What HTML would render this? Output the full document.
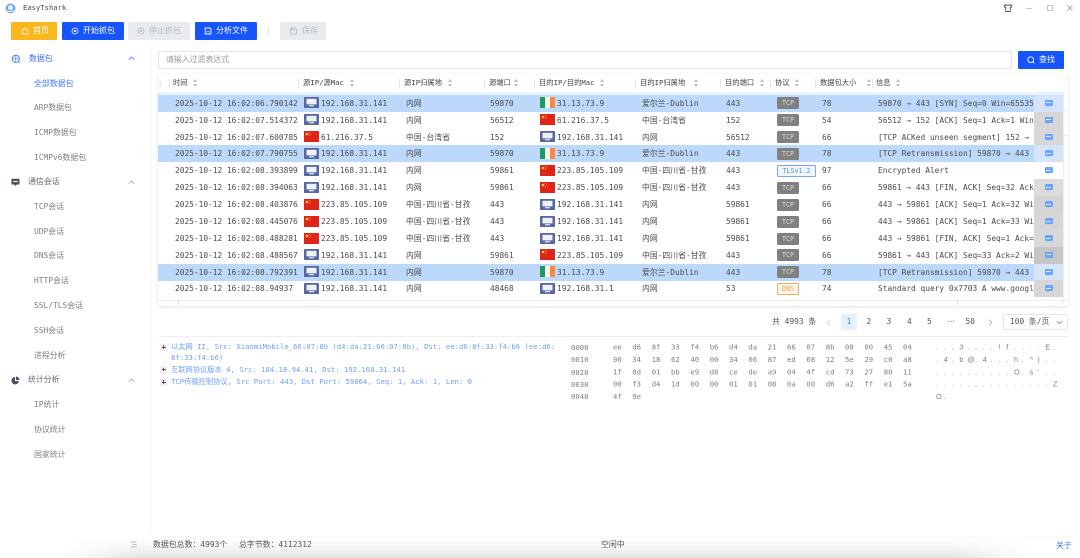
<!DOCTYPE html>
<html><head><meta charset="utf-8"><style>
*{box-sizing:border-box}
html,body{margin:0;padding:0;background:#fff}
#p{width:1080px;height:558px;position:relative;overflow:hidden;background:#fff;font-family:"DejaVu Sans Mono","Noto Sans CJK SC",monospace;font-size:7.85px;color:#4b4b4b;filter:blur(.3px)}
body{width:1080px;height:558px;overflow:hidden}
.a{position:absolute;white-space:nowrap}
.btn{position:absolute;top:22px;height:18px;border-radius:1px;color:#fff;background:#1555fb;font-size:8px;line-height:18px;font-family:"Noto Sans CJK SC",sans-serif}
.btn span{position:absolute;top:0}
.btn svg{position:absolute;top:5px}
.dis{background:#e9ebef;color:#b5b9c0}
.s{position:absolute;left:34px;color:#7d8087;font-size:7.9px;line-height:10px;white-space:nowrap;font-family:"DejaVu Sans Mono","Noto Sans CJK SC",monospace}
.g{position:absolute;left:29px;color:#676a70;font-size:7.9px;line-height:10px;font-family:"Noto Sans CJK SC",sans-serif}
.chev{position:absolute;left:128px}
.th{position:absolute;top:78px;font-size:7.3px;line-height:10px;color:#444;white-space:nowrap}
.th i{position:absolute;top:0;width:5px;height:10px}
.th i:before{content:"";position:absolute;left:0;top:1px;border:2.2px solid transparent;border-top:0;border-bottom:3px solid #bbb}
.th i:after{content:"";position:absolute;left:0;top:6px;border:2.2px solid transparent;border-bottom:0;border-top:3px solid #bbb}
.sp{position:absolute;top:79px;width:1px;height:10px;background:#e6e6e6}
.r{position:absolute;left:158px;width:905px;height:17px;line-height:17px;overflow:hidden}
.r.h{background:#bcd8fb}
.r span{position:absolute;top:0;white-space:nowrap}
.r svg{position:absolute;top:2.5px;width:15px;height:11px}
.c1{left:17px}.c2{left:163px}.c3{left:248px}.c4{left:332px}.c5{left:399px}.c6{left:484px}.c7{left:568px}.c8{left:664px}.c9{left:720px;width:156px;overflow:hidden}
.i1{left:146px}.i2{left:382px}
.tag{position:absolute;left:619px;top:2.5px;width:22px;height:12px;background:#808080;color:#dcdcdc;border-radius:1.5px;font-size:6.6px;line-height:12px;text-align:center}
.op{position:absolute;left:876px;top:0;width:29px;height:17px}
.op b{position:absolute;left:10.500px;top:5px;width:8px;height:6px;background:#6aa5fb;border-radius:1px}
.op b:after{content:"";position:absolute;left:2.5px;top:6px;border:1.5px solid transparent;border-top:1.5px solid #6aa5fb;border-bottom:0}
.op b:before{content:"";position:absolute;left:1.5px;top:2.5px;width:5px;height:1px;background:#dbe9ff}
.pg{position:absolute;top:317px;font-size:7.9px;line-height:10px;color:#555;white-space:nowrap}
.d{position:absolute;left:171px;color:#6fa0fb;font-size:7.25px;line-height:11px;width:395px}
.pl{position:absolute;left:160px;width:7px;height:7px;background:#efefef;border-radius:1px}
.pl:before{content:"";position:absolute;left:2px;top:3px;width:3.5px;height:1px;background:#555}
.pl:after{content:"";position:absolute;left:3.2px;top:1.7px;width:1px;height:3.5px;background:#555}
.x{position:absolute;color:#7c7f86;font-size:7.25px;line-height:10px;white-space:pre}
</style></head><body><div id="p">
<svg width="0" height="0" style="position:absolute"><defs>
<symbol id="pc" viewBox="0 0 15 11"><rect width="15" height="11" rx=".8" fill="#56689e"/><rect x="2.5" y="1.8" width="10" height="5.6" fill="#eef1f8"/><rect x="5" y="8.2" width="5" height="1.1" fill="#eef1f8"/></symbol>
<symbol id="cn" viewBox="0 0 15 11"><rect width="15" height="11" fill="#e0241a"/><circle cx="3" cy="3" r="1.3" fill="#f6d32d"/><circle cx="5.6" cy="1.5" r=".45" fill="#f6d32d"/><circle cx="6.3" cy="3" r=".45" fill="#f6d32d"/><circle cx="5.6" cy="4.6" r=".45" fill="#f6d32d"/></symbol>
<symbol id="ie" viewBox="0 0 15 11"><rect width="5" height="11" fill="#1f9a5b"/><rect x="5" width="5" height="11" fill="#f8f8f8"/><rect x="10" width="5" height="11" fill="#fb8a3c"/></symbol>
</defs></svg>

<!-- bottom gray glow -->
<div style="position:absolute;left:60px;top:538px;width:970px;height:20px;background:linear-gradient(to bottom,#fff 0,#f6f6f6 45%,#e4e4e4 100%);-webkit-mask-image:linear-gradient(to right,transparent 0,#000 8%,#000 92%,transparent 100%)"></div>

<!-- title bar -->
<svg class="a" style="left:5px;top:3px" width="11" height="11" viewBox="0 0 11 11"><circle cx="5.5" cy="5.5" r="5" fill="#6ea5ec"/><circle cx="5.5" cy="4.6" r="2.6" fill="#e4effc"/><path d="M1.5 7.5q4 2.4 8 0" stroke="#fff" fill="none"/></svg>
<div class="a" style="left:23px;top:3px;font-size:7.2px;line-height:10px;color:#4a4a4a">EasyTshark</div>
<svg class="a" style="left:1003px;top:3px" width="10" height="10" viewBox="0 0 10 10"><path d="M2.8 1.5L1 2.8l.9 1.6.9-.3V8.6h4.4V4.1l.9.3L9 2.8 7.2 1.5q-2.2 1.6-4.4 0z" fill="none" stroke="#555" stroke-width=".9"/></svg>
<div class="a" style="left:1026px;top:8px;width:6px;height:1px;background:#ccc"></div>
<div class="a" style="left:1047px;top:5px;width:6px;height:6px;border:1px solid #c6c6c6"></div>
<svg class="a" style="left:1067px;top:5px" width="6" height="6" viewBox="0 0 6 6"><path d="M.5.5l5 5M5.500.5l-5 5" stroke="#aaa" stroke-width=".9"/></svg>

<!-- toolbar -->
<div class="btn" style="left:11px;width:46px;background:#fab81e"><svg style="left:10px" width="8" height="8" viewBox="0 0 8 8"><path d="M1 3.500L4 1l3 2.500V7H1z" fill="none" stroke="#fff" stroke-width=".8"/></svg><span style="left:22px">首页</span></div>
<div class="btn" style="left:62px;width:62px"><svg style="left:9px" width="8" height="8" viewBox="0 0 8 8"><circle cx="4" cy="4" r="3" fill="none" stroke="#fff" stroke-width=".8"/><circle cx="4" cy="4" r="1.100" fill="#fff"/></svg><span style="left:21px">开始抓包</span></div>
<div class="btn dis" style="left:128px;width:62px"><svg style="left:9px" width="8" height="8" viewBox="0 0 8 8"><circle cx="4" cy="4" r="3" fill="none" stroke="#b5b9c0" stroke-width=".8"/><circle cx="4" cy="4" r="1.100" fill="#b5b9c0"/></svg><span style="left:21px">停止抓包</span></div>
<div class="btn" style="left:195px;width:62px"><svg style="left:9px" width="8" height="8" viewBox="0 0 8 8"><path d="M1.200 1h4.600L7 2.200V7H1.200zM2.600 4.800h3" fill="none" stroke="#fff" stroke-width=".9"/></svg><span style="left:21px">分析文件</span></div>
<div class="a" style="left:268px;top:28px;width:1px;height:7px;background:#e4e4e4"></div>
<div class="btn dis" style="left:280px;width:46px"><svg style="left:10px" width="7" height="8" viewBox="0 0 7 8"><path d="M.8 1h4.400L6.400 2.200V7H.8zM2 1v2h3" fill="none" stroke="#b5b9c0" stroke-width=".8"/></svg><span style="left:22px">保存</span></div>

<!-- main panel -->
<div style="position:absolute;left:152px;top:44px;width:923px;height:492px;background:#fff;box-shadow:0 0 4px rgba(0,0,0,.06)"></div>

<!-- sidebar -->
<svg class="a" style="left:11px;top:54px" width="10" height="10" viewBox="0 0 10 10"><circle cx="4.800" cy="4.800" r="3.600" fill="none" stroke="#3f7bf0" stroke-width=".9"/><path d="M1.200 4.800h7.200M4.800 1.200v7.200M7.500 7.500l1.500 1.500" stroke="#3f7bf0" stroke-width=".7"/></svg>
<div class="g" style="top:54px;left:29px;color:#3f6ff0">数据包</div>
<svg class="chev" style="top:56px" width="7" height="5" viewBox="0 0 7 5"><path d="M.7 3.800L3.500 1l2.800 2.800" fill="none" stroke="#4f7ff0" stroke-width=".8"/></svg>
<div class="s" style="top:78.500px;color:#3f7bf5">全部数据包</div>
<div class="s" style="top:103px">ARP数据包</div>
<div class="s" style="top:127.500px">ICMP数据包</div>
<div class="s" style="top:152.500px">ICMPv6数据包</div>
<svg class="a" style="left:11px;top:178px" width="9" height="9" viewBox="0 0 9 9"><path d="M.5.800h8v5.700H5.700L4.500 8 3.300 6.500H.5z" fill="#4a5260"/><rect x="2.200" y="3" width="4.600" height="1" fill="#fff"/></svg>
<div class="g" style="top:177px;left:28px">通信会话</div>
<svg class="chev" style="top:180px" width="7" height="5" viewBox="0 0 7 5"><path d="M.7 3.800L3.500 1l2.800 2.800" fill="none" stroke="#aaa" stroke-width=".8"/></svg>
<div class="s" style="top:202px">TCP会话</div>
<div class="s" style="top:227px">UDP会话</div>
<div class="s" style="top:251px">DNS会话</div>
<div class="s" style="top:276px">HTTP会话</div>
<div class="s" style="top:301px">SSL/TLS会话</div>
<div class="s" style="top:325.500px">SSH会话</div>
<div class="s" style="top:350.500px">进程分析</div>
<svg class="a" style="left:11px;top:376px" width="9" height="9" viewBox="0 0 9 9"><path d="M4 1a3.700 3.700 0 1 0 3.800 4H4z" fill="#4a5260"/><path d="M5 .5a3.500 3.500 0 0 1 3.500 3.500H5z" fill="#4a5260"/></svg>
<div class="g" style="top:375px;left:28px">统计分析</div>
<svg class="chev" style="top:378px" width="7" height="5" viewBox="0 0 7 5"><path d="M.7 3.800L3.500 1l2.800 2.800" fill="none" stroke="#aaa" stroke-width=".8"/></svg>
<div class="s" style="top:400px">IP统计</div>
<div class="s" style="top:425px">协议统计</div>
<div class="s" style="top:449.500px">国家统计</div>

<!-- filter -->
<div style="position:absolute;left:158px;top:51px;width:854px;height:18px;border:1px solid #e6e6e6;border-radius:1px;background:#fff"></div>
<div class="a" style="left:166px;top:55px;font-size:7.900px;line-height:10px;color:#9a9a9a;font-family:'Noto Sans CJK SC',sans-serif">请输入过滤表达式</div>
<div style="position:absolute;left:1018px;top:51px;width:46px;height:18px;background:#1555fb;border-radius:1px"></div>
<svg class="a" style="left:1027px;top:56px" width="8" height="8" viewBox="0 0 8 8"><circle cx="3.700" cy="3.700" r="2.900" fill="none" stroke="#fff" stroke-width=".9"/><path d="M5.800 5.800l1.500 1.500" stroke="#fff" stroke-width=".9"/></svg>
<div class="a" style="left:1039px;top:55px;color:#fff;font-size:8px;line-height:10px;font-family:'Noto Sans CJK SC',sans-serif">查找</div>

<!-- table frame -->
<div style="position:absolute;left:158px;top:74px;width:910px;height:232px;background:#fff;box-shadow:0 1px 3px rgba(0,0,0,.12)"></div>
<div style="position:absolute;left:158px;top:92px;width:905px;height:2.500px;background:#e9f2fd"></div>
<div class="a" style="left:158px;top:78px;font-size:7px;line-height:10px;color:#888">:</div>
<div class="sp" style="left:169px"></div><div class="sp" style="left:298px"></div><div class="sp" style="left:399px"></div><div class="sp" style="left:484px"></div><div class="sp" style="left:534px"></div><div class="sp" style="left:635px"></div><div class="sp" style="left:720px"></div><div class="sp" style="left:770px"></div><div class="sp" style="left:815px"></div><div class="sp" style="left:872px"></div>
<div class="th" style="left:173px">时间<i style="left:20px"></i></div>
<div class="th" style="left:303px">源IP/源Mac<i style="left:47px"></i></div>
<div class="th" style="left:404px">源IP归属地<i style="left:44px"></i></div>
<div class="th" style="left:489px">源端口<i style="left:25px"></i></div>
<div class="th" style="left:539px">目的IP/目的Mac<i style="left:61px"></i></div>
<div class="th" style="left:640px">目的IP归属地<i style="left:54px"></i></div>
<div class="th" style="left:725px">目的端口<i style="left:35px"></i></div>
<div class="th" style="left:775px">协议<i style="left:20px"></i></div>
<div class="th" style="left:820px">数据包大小<i style="left:47px"></i></div>
<div class="th" style="left:876px">信息<i style="left:20px"></i></div>

<!-- rows -->
<div class="r h" style="top:94.500px"><span class="c1">2025-10-12 16:02:06.790142</span><svg class="i1"><use href="#pc"/></svg><span class="c2">192.168.31.141</span><span class="c3">内网</span><span class="c4">59870</span><svg class="i2"><use href="#ie"/></svg><span class="c5">31.13.73.9</span><span class="c6">爱尔兰-Dublin</span><span class="c7">443</span><div class="tag">TCP</div><span class="c8">78</span><span class="c9">59870 → 443 [SYN] Seq=0 Win=65535 Len=0</span><div class="op" style="background:#d5e4f9"><b></b></div></div>
<div class="r" style="top:111.500px"><span class="c1">2025-10-12 16:02:07.514372</span><svg class="i1"><use href="#pc"/></svg><span class="c2">192.168.31.141</span><span class="c3">内网</span><span class="c4">56512</span><svg class="i2"><use href="#cn"/></svg><span class="c5">61.216.37.5</span><span class="c6">中国-台湾省</span><span class="c7">152</span><div class="tag">TCP</div><span class="c8">54</span><span class="c9">56512 → 152 [ACK] Seq=1 Ack=1 Win=65535</span><div class="op" style="background:#d6d6d6"><b></b></div></div>
<div class="r" style="top:128.500px"><span class="c1">2025-10-12 16:02:07.600785</span><svg class="i1"><use href="#cn"/></svg><span class="c2">61.216.37.5</span><span class="c3">中国-台湾省</span><span class="c4">152</span><svg class="i2"><use href="#pc"/></svg><span class="c5">192.168.31.141</span><span class="c6">内网</span><span class="c7">56512</span><div class="tag">TCP</div><span class="c8">66</span><span class="c9">[TCP ACKed unseen segment] 152 → 56512</span><div class="op" style="background:#d8d8d8"><b></b></div></div>
<div class="r h" style="top:145.300px"><span class="c1">2025-10-12 16:02:07.790755</span><svg class="i1"><use href="#pc"/></svg><span class="c2">192.168.31.141</span><span class="c3">内网</span><span class="c4">59870</span><svg class="i2"><use href="#ie"/></svg><span class="c5">31.13.73.9</span><span class="c6">爱尔兰-Dublin</span><span class="c7">443</span><div class="tag">TCP</div><span class="c8">78</span><span class="c9">[TCP Retransmission] 59870 → 443</span><div class="op" style="background:#d5e4f9"><b></b></div></div>
<div class="r" style="top:162px"><span class="c1">2025-10-12 16:02:08.393899</span><svg class="i1"><use href="#pc"/></svg><span class="c2">192.168.31.141</span><span class="c3">内网</span><span class="c4">59861</span><svg class="i2"><use href="#cn"/></svg><span class="c5">223.85.105.109</span><span class="c6">中国-四川省-甘孜</span><span class="c7">443</span><div class="tag" style="width:39px;background:#f2f7ff;color:#5a8cf0;border:1px solid #7aa5f5;line-height:10px">TLSv1.2</div><span class="c8" style="left:664px">97</span><span class="c9">Encrypted Alert</span><div class="op"><b></b></div></div>
<div class="r" style="top:179px"><span class="c1">2025-10-12 16:02:08.394063</span><svg class="i1"><use href="#pc"/></svg><span class="c2">192.168.31.141</span><span class="c3">内网</span><span class="c4">59861</span><svg class="i2"><use href="#cn"/></svg><span class="c5">223.85.105.109</span><span class="c6">中国-四川省-甘孜</span><span class="c7">443</span><div class="tag">TCP</div><span class="c8">66</span><span class="c9">59861 → 443 [FIN, ACK] Seq=32 Ack=1 Win</span><div class="op" style="background:#dcdcdc"><b></b></div></div>
<div class="r" style="top:196px"><span class="c1">2025-10-12 16:02:08.403876</span><svg class="i1"><use href="#cn"/></svg><span class="c2">223.85.105.109</span><span class="c3">中国-四川省-甘孜</span><span class="c4">443</span><svg class="i2"><use href="#pc"/></svg><span class="c5">192.168.31.141</span><span class="c6">内网</span><span class="c7">59861</span><div class="tag">TCP</div><span class="c8">66</span><span class="c9">443 → 59861 [ACK] Seq=1 Ack=32 Win=65535</span><div class="op" style="background:#d4d4d4"><b></b></div></div>
<div class="r" style="top:213px"><span class="c1">2025-10-12 16:02:08.445076</span><svg class="i1"><use href="#cn"/></svg><span class="c2">223.85.105.109</span><span class="c3">中国-四川省-甘孜</span><span class="c4">443</span><svg class="i2"><use href="#pc"/></svg><span class="c5">192.168.31.141</span><span class="c6">内网</span><span class="c7">59861</span><div class="tag">TCP</div><span class="c8">66</span><span class="c9">443 → 59861 [ACK] Seq=1 Ack=33 Win=65535</span><div class="op" style="background:#d6d6d6"><b></b></div></div>
<div class="r" style="top:230px"><span class="c1">2025-10-12 16:02:08.488281</span><svg class="i1"><use href="#cn"/></svg><span class="c2">223.85.105.109</span><span class="c3">中国-四川省-甘孜</span><span class="c4">443</span><svg class="i2"><use href="#pc"/></svg><span class="c5">192.168.31.141</span><span class="c6">内网</span><span class="c7">59861</span><div class="tag">TCP</div><span class="c8">66</span><span class="c9">443 → 59861 [FIN, ACK] Seq=1 Ack=33 Win</span><div class="op" style="background:#d8d8d8"><b></b></div></div>
<div class="r" style="top:246.800px"><span class="c1">2025-10-12 16:02:08.488567</span><svg class="i1"><use href="#pc"/></svg><span class="c2">192.168.31.141</span><span class="c3">内网</span><span class="c4">59861</span><svg class="i2"><use href="#cn"/></svg><span class="c5">223.85.105.109</span><span class="c6">中国-四川省-甘孜</span><span class="c7">443</span><div class="tag">TCP</div><span class="c8">66</span><span class="c9">59861 → 443 [ACK] Seq=33 Ack=2 Win=65535</span><div class="op" style="background:#c6c6c6"><b></b></div></div>
<div class="r h" style="top:263.500px"><span class="c1">2025-10-12 16:02:08.792391</span><svg class="i1"><use href="#pc"/></svg><span class="c2">192.168.31.141</span><span class="c3">内网</span><span class="c4">59870</span><svg class="i2"><use href="#ie"/></svg><span class="c5">31.13.73.9</span><span class="c6">爱尔兰-Dublin</span><span class="c7">443</span><div class="tag">TCP</div><span class="c8">78</span><span class="c9">[TCP Retransmission] 59870 → 443</span><div class="op" style="background:#d5e4f9"><b></b></div></div>
<div class="r" style="top:280px"><span class="c1">2025-10-12 16:02:08.94937</span><svg class="i1"><use href="#pc"/></svg><span class="c2">192.168.31.141</span><span class="c3">内网</span><span class="c4">48468</span><svg class="i2"><use href="#pc"/></svg><span class="c5">192.168.31.1</span><span class="c6">内网</span><span class="c7">53</span><div class="tag" style="background:#fff6ec;color:#fb9a3c;border:1px solid #fba85c;line-height:10px">DNS</div><span class="c8">74</span><span class="c9">Standard query 0x7703 A www.google.com</span><div class="op" style="background:#d6d6d6"><b></b></div></div>

<!-- table scrollbars -->
<div style="position:absolute;left:158px;top:300px;width:910px;height:1px;background:#eee"></div>
<div style="position:absolute;left:178px;top:300px;width:1px;height:5px;background:#e4e4e4"></div>
<div style="position:absolute;left:957px;top:300px;width:1px;height:5px;background:#e4e4e4"></div>
<div style="position:absolute;left:1062px;top:300px;width:1px;height:5px;background:#e4e4e4"></div>
<div style="position:absolute;left:1063px;top:92px;width:1px;height:208px;background:#eee"></div>
<div style="position:absolute;left:1063px;top:110px;width:5px;height:1px;background:#eee"></div>
<div style="position:absolute;left:1063px;top:135px;width:5px;height:1px;background:#eee"></div>

<!-- pagination -->
<div class="pg" style="left:772px">共 4993 条</div>
<svg class="a" style="left:826px;top:319px" width="5" height="7" viewBox="0 0 5 7"><path d="M3.800.8L1.200 3.500l2.600 2.700" fill="none" stroke="#ccc" stroke-width=".8"/></svg>
<div class="a" style="left:841px;top:314px;width:16px;height:16px;background:#e6f0fe;border-radius:1px;color:#3d7ef5;font-size:7.900px;line-height:16px;text-align:center">1</div>
<div class="pg" style="left:866.500px">2</div><div class="pg" style="left:886.500px">3</div><div class="pg" style="left:907px">4</div><div class="pg" style="left:927px">5</div><div class="pg" style="left:946.500px;color:#888;letter-spacing:-2.300px">···</div><div class="pg" style="left:965.500px">50</div>
<svg class="a" style="left:988px;top:319px" width="5" height="7" viewBox="0 0 5 7"><path d="M1.200.8l2.600 2.700-2.600 2.700" fill="none" stroke="#999" stroke-width=".7"/></svg>
<div class="a" style="left:1003px;top:314px;width:65px;height:16px;border:1px solid #e6e6e6;border-radius:1px;line-height:14px;padding-left:6px;color:#555">100 条/页</div>
<svg class="a" style="left:1056px;top:320px" width="7" height="5" viewBox="0 0 7 5"><path d="M.8 1l2.700 2.700L6.200 1" fill="none" stroke="#888" stroke-width=".8"/></svg>

<div style="position:absolute;left:158px;top:336px;width:910px;height:1px;background:#efefef"></div>

<!-- detail -->
<div class="pl" style="left:160px;top:343.500px"></div>
<div class="d" style="top:341px">以太网 II, Src: XiaomiMobile_66:07:8b (d4:da:21:66:07:8b), Dst: ee:d6:8f:33:f4:b6 (ee:d6:<br>8f:33:f4:b6)</div>
<div class="pl" style="left:160px;top:366px"></div>
<div class="d" style="top:363.500px">互联网协议版本 4, Src: 104.18.94.41, Dst: 192.168.31.141</div>
<div class="pl" style="left:160px;top:378.500px"></div>
<div class="d" style="top:376px">TCP传输控制协议, Src Port: 443, Dst Port: 59864, Seq: 1, Ack: 1, Len: 0</div>

<!-- hex -->
<div class="x" style="left:571px;top:342px;line-height:12.350px">0000
0010
0020
0030
0040</div>
<svg class="a" style="left:0;top:0;overflow:visible" width="1080" height="558" font-family="DejaVu Sans Mono" font-size="7.25" fill="#7c7f86">
<text y="349.500"><tspan x="613">ee</tspan><tspan x="632.300">d6</tspan><tspan x="651.700">8f</tspan><tspan x="671">33</tspan><tspan x="690.400">f4</tspan><tspan x="709.700">b6</tspan><tspan x="729">d4</tspan><tspan x="748.400">da</tspan><tspan x="767.700">21</tspan><tspan x="787">66</tspan><tspan x="806.400">07</tspan><tspan x="825.800">8b</tspan><tspan x="845">08</tspan><tspan x="864.400">00</tspan><tspan x="883.800">45</tspan><tspan x="903">04</tspan></text>
<text y="362"><tspan x="613">00</tspan><tspan x="632.300">34</tspan><tspan x="651.700">18</tspan><tspan x="671">62</tspan><tspan x="690.400">40</tspan><tspan x="709.700">00</tspan><tspan x="729">34</tspan><tspan x="748.400">06</tspan><tspan x="767.700">87</tspan><tspan x="787">ed</tspan><tspan x="806.400">68</tspan><tspan x="825.800">12</tspan><tspan x="845">5e</tspan><tspan x="864.400">29</tspan><tspan x="883.800">c0</tspan><tspan x="903">a8</tspan></text>
<text y="374.300"><tspan x="613">1f</tspan><tspan x="632.300">8d</tspan><tspan x="651.700">01</tspan><tspan x="671">bb</tspan><tspan x="690.400">e9</tspan><tspan x="709.700">d8</tspan><tspan x="729">ce</tspan><tspan x="748.400">de</tspan><tspan x="767.700">a9</tspan><tspan x="787">04</tspan><tspan x="806.400">4f</tspan><tspan x="825.800">cd</tspan><tspan x="845">73</tspan><tspan x="864.400">27</tspan><tspan x="883.800">80</tspan><tspan x="903">11</tspan></text>
<text y="386.700"><tspan x="613">00</tspan><tspan x="632.300">f3</tspan><tspan x="651.700">d4</tspan><tspan x="671">1d</tspan><tspan x="690.400">00</tspan><tspan x="709.700">00</tspan><tspan x="729">01</tspan><tspan x="748.400">01</tspan><tspan x="767.700">08</tspan><tspan x="787">0a</tspan><tspan x="806.400">00</tspan><tspan x="825.800">d6</tspan><tspan x="845">a2</tspan><tspan x="864.400">ff</tspan><tspan x="883.800">e1</tspan><tspan x="903">5a</tspan></text>
<text y="399"><tspan x="613">4f</tspan><tspan x="632.300">9e</tspan></text>
<g font-family="Liberation Sans">
<text y="349.500" x="936" letter-spacing="0">.<tspan x="943.800">.</tspan><tspan x="951.600">.</tspan><tspan x="959.400">3</tspan><tspan x="967.200">.</tspan><tspan x="975">.</tspan><tspan x="982.800">.</tspan><tspan x="990.600">.</tspan><tspan x="998.400">!</tspan><tspan x="1006.200">f</tspan><tspan x="1014">.</tspan><tspan x="1021.800">.</tspan><tspan x="1029.600">.</tspan><tspan x="1037.400">.</tspan><tspan x="1045.200">E</tspan><tspan x="1053">.</tspan></text>
<text y="362" x="936">.<tspan x="943.800">4</tspan><tspan x="951.600">.</tspan><tspan x="959.400">b</tspan><tspan x="967.200">@</tspan><tspan x="975">.</tspan><tspan x="982.800">4</tspan><tspan x="990.600">.</tspan><tspan x="998.400">.</tspan><tspan x="1006.200">.</tspan><tspan x="1014">h</tspan><tspan x="1021.800">.</tspan><tspan x="1029.600">^</tspan><tspan x="1037.400">)</tspan><tspan x="1045.200">.</tspan><tspan x="1053">.</tspan></text>
<text y="374.300" x="936">.<tspan x="943.800">.</tspan><tspan x="951.600">.</tspan><tspan x="959.400">.</tspan><tspan x="967.200">.</tspan><tspan x="975">.</tspan><tspan x="982.800">.</tspan><tspan x="990.600">.</tspan><tspan x="998.400">.</tspan><tspan x="1006.200">.</tspan><tspan x="1014">O</tspan><tspan x="1021.800">.</tspan><tspan x="1029.600">s</tspan><tspan x="1037.400">'</tspan><tspan x="1045.200">.</tspan><tspan x="1053">.</tspan></text>
<text y="386.700" x="936">.<tspan x="943.800">.</tspan><tspan x="951.600">.</tspan><tspan x="959.400">.</tspan><tspan x="967.200">.</tspan><tspan x="975">.</tspan><tspan x="982.800">.</tspan><tspan x="990.600">.</tspan><tspan x="998.400">.</tspan><tspan x="1006.200">.</tspan><tspan x="1014">.</tspan><tspan x="1021.800">.</tspan><tspan x="1029.600">.</tspan><tspan x="1037.400">.</tspan><tspan x="1045.200">.</tspan><tspan x="1053">Z</tspan></text>
<text y="399" x="936">O<tspan x="943.800">.</tspan></text>
</g>
</svg>

<!-- status bar -->
<svg class="a" style="left:130px;top:541px" width="7" height="7" viewBox="0 0 7 7"><path d="M.5 1h6M2.500 3.500h4M.5 6h6" stroke="#aaa" stroke-width=".8"/></svg>
<div class="a" style="left:153px;top:540px;font-size:7.900px;line-height:10px;color:#555">数据包总数：4993个</div>
<div class="a" style="left:239px;top:540px;font-size:7.900px;line-height:10px;color:#555">总字节数：4112312</div>
<div class="a" style="left:601px;top:540px;font-size:7.900px;line-height:10px;color:#555">空闲中</div>
<div class="a" style="left:1056px;top:541px;font-size:7.900px;line-height:10px;color:#3f7bf5">关于</div>
</div></body></html>
